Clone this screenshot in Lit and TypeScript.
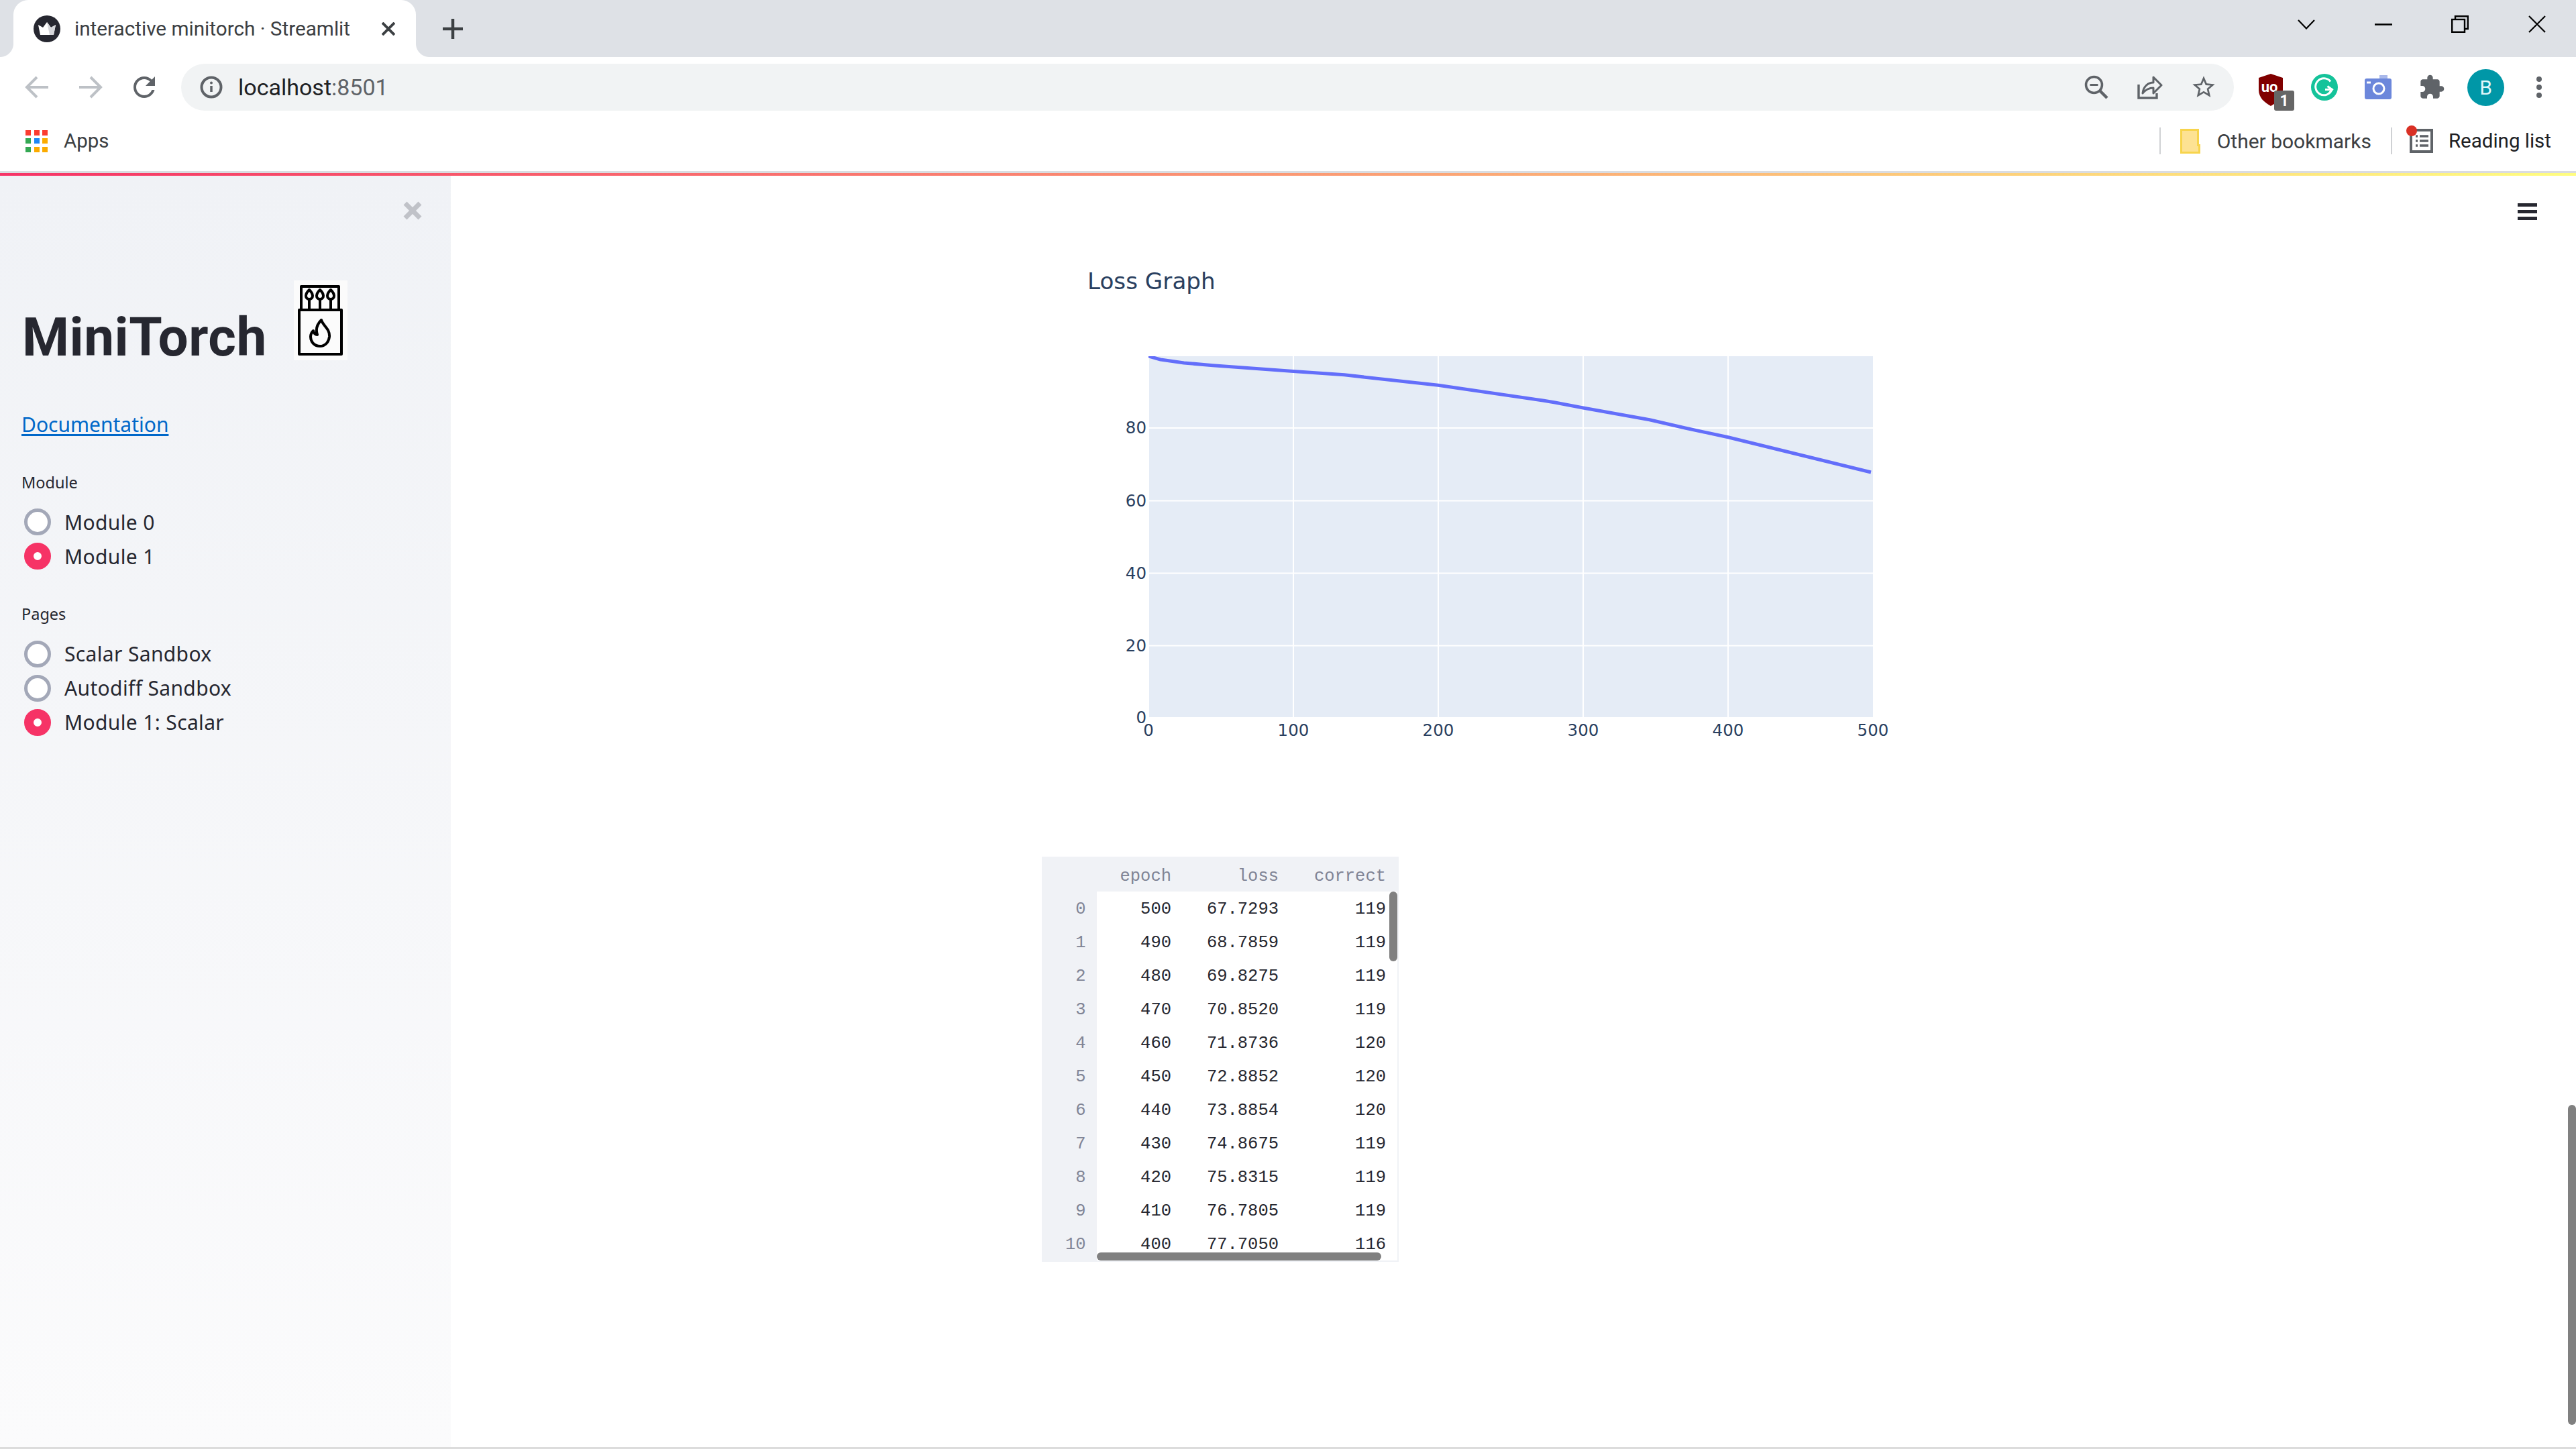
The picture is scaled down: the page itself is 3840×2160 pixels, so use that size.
/**
 * Browser window showing the MiniTorch Streamlit app
 */

import { LitElement, css, html, svg } from "lit";
import { customElement } from "lit/decorators.js";
import { classMap } from "lit/directives/class-map.js";

const LOSS_ROWS = [
  [500, "67.7293", 119],
  [490, "68.7859", 119],
  [480, "69.8275", 119],
  [470, "70.8520", 119],
  [460, "71.8736", 120],
  [450, "72.8852", 120],
  [440, "73.8854", 120],
  [430, "74.8675", 119],
  [420, "75.8315", 119],
  [410, "76.7805", 119],
  [400, "77.7050", 116],
];

const LOSS_LINE =
  "1712,531 1730,536 1765,541 1808,544.7 1928,553.4 2004,558.8 2144,574.3 2300,597 2318,600 2360,608 2459,625.7 2512,638 2576,651.8 2789,704";

const APP_COLORS = ["#fb3c30", "#fb3c30", "#fb3c30", "#34a853", "#1e88f5", "#fbab00", "#34a853", "#fbab00", "#fbab00"];

@customElement("app-root")
export class AppRoot extends LitElement {
  static styles = css`
    :host {
      display: block;
      width: 3840px;
      height: 2160px;
      overflow: hidden;
      background: #fff;
      font-family: "Roboto", "Noto Sans", sans-serif;
    }

    svg {
      display: block;
      flex: none;
    }

    .page {
      display: flex;
      flex-direction: column;
      height: 2160px;
    }

    /* tab strip */
    .tabstrip {
      display: flex;
      align-items: stretch;
      height: 85px;
      flex: none;
      background: #dee1e6;
    }

    .tab {
      position: relative;
      display: flex;
      align-items: center;
      width: 600px;
      margin-left: 20px;
      padding-left: 30px;
      box-sizing: border-box;
      background: #fff;
      border-radius: 22px 22px 0 0;
      font-size: 29.7px;
      color: #3c4043;
    }

    .tab::before,
    .tab::after {
      content: "";
      position: absolute;
      bottom: 0;
      width: 20px;
      height: 20px;
    }

    .tab::before {
      left: -20px;
      background: radial-gradient(circle at 0 0, #dee1e6 19.5px, #fff 20.5px);
    }

    .tab::after {
      right: -20px;
      background: radial-gradient(circle at 100% 0, #dee1e6 19.5px, #fff 20.5px);
    }

    .tab-title {
      margin-left: 21px;
      white-space: nowrap;
    }

    .tab-close {
      position: absolute;
      right: 31px;
      top: 33px;
    }

    .new-tab {
      margin-left: 40px;
      align-self: center;
    }

    .window-controls {
      display: flex;
      margin-left: auto;
      margin-right: 1px;
    }

    .window-controls div {
      display: flex;
      align-items: center;
      justify-content: center;
      width: 114.5px;
      height: 72px;
    }

    /* navigation bar */
    .nav {
      display: flex;
      align-items: center;
      height: 85px;
      flex: none;
      padding: 5px 15px 0;
      box-sizing: border-box;
    }

    .cell {
      display: flex;
      align-items: center;
      justify-content: center;
      width: 80px;
      height: 70px;
      flex: none;
      position: relative;
    }

    .omnibox {
      display: flex;
      align-items: center;
      flex: 1;
      height: 70px;
      margin: 0 15px;
      padding: 0 5px 0 28px;
      background: #f1f3f4;
      border-radius: 35px;
    }

    .url {
      margin-left: 23px;
      font-size: 34px;
      color: #202124;
      flex: 1;
    }

    .url span {
      color: #5f6368;
    }

    .ublock {
      margin: 15px 0 0 17px;
    }

    /* bookmarks bar */
    .bookmarks {
      display: flex;
      align-items: center;
      height: 85px;
      flex: none;
      padding: 0 37px 5px 38px;
      box-sizing: border-box;
      font-size: 29.5px;
      color: #3c4043;
    }

    .apps-grid {
      display: grid;
      grid-template-columns: repeat(3, 8px);
      grid-auto-rows: 8px;
      gap: 4.5px;
      margin-right: 24px;
    }

    .bookmark-sep {
      width: 2px;
      height: 40px;
      background: #cfd1d4;
    }

    .push {
      margin-left: auto;
    }

    .folder {
      margin: 0 25px 0 29px;
    }

    .other-text {
      font-size: 30px;
      margin-right: 29px;
    }

    .reading {
      position: relative;
      margin: 0 19px 0 27px;
    }

    .reading-text {
      color: #202124;
    }

    .rule {
      height: 3px;
      flex: none;
      background: #dadce0;
    }

    .decoration {
      height: 4px;
      flex: none;
      background: linear-gradient(90deg, #f63366, #fffd80);
    }

    /* streamlit app */
    .app {
      display: flex;
      flex: 1;
      min-height: 0;
    }

    .sidebar {
      width: 672px;
      flex: none;
      box-sizing: border-box;
      background: linear-gradient(180deg, #f0f2f6, #fbfbfc);
      color: #262730;
      font-family: "Noto Sans", sans-serif;
    }

    .close-row {
      display: flex;
      align-items: center;
      justify-content: flex-end;
      height: 104px;
      padding-right: 43px;
    }

    .brand {
      display: flex;
      align-items: flex-start;
      margin-top: 52px;
      padding-left: 33px;
    }

    .brand h1 {
      margin: 44.7px 40px 0 0;
      font-family: "Roboto", sans-serif;
      font-size: 80px;
      line-height: 80px;
      font-weight: 700;
      letter-spacing: 0.5px;
      color: #262730;
    }

    .doc-link {
      display: block;
      margin: 70.7px 0 0 32px;
      font-size: 30px;
      line-height: 40px;
      color: #0068c9;
      text-decoration: underline;
      text-decoration-thickness: 3px;
      text-underline-offset: 3px;
    }

    .field-label {
      padding-left: 32px;
      font-size: 23.5px;
      line-height: 30px;
    }

    .field-label.module {
      margin-top: 50.6px;
    }

    .field-label.pages {
      margin-top: 45.5px;
    }

    .radios {
      margin-top: 19px;
      padding-left: 36px;
    }

    .radio {
      display: flex;
      align-items: center;
      gap: 20px;
      height: 51px;
      font-size: 30px;
      letter-spacing: 0.35px;
    }

    .radio-mark {
      width: 40px;
      height: 40px;
      box-sizing: border-box;
      flex: none;
      border: 5px solid #a3a8b8;
      border-radius: 50%;
      background: #fff;
    }

    .radio-mark.checked {
      border: 14px solid #f63366;
    }

    .main {
      position: relative;
      flex: 1;
      padding-left: 881px;
      overflow: hidden;
    }

    .chart {
      margin-top: 118px;
    }

    .chart-title {
      font-family: "DejaVu Sans", sans-serif;
      font-size: 34.2px;
      fill: #2a3f5f;
    }

    .tick {
      font-family: "DejaVu Sans", sans-serif;
      font-size: 24.5px;
      fill: #2a3f5f;
    }

    .df {
      position: relative;
      width: 532px;
      height: 604px;
      margin-top: 77px;
      box-sizing: border-box;
      overflow: hidden;
      background: #fff;
      border: solid #f0f2f6;
      border-width: 0 2px 2px 0;
      font-family: "Liberation Mono", monospace;
      font-size: 25.5px;
      color: #262730;
    }

    .df-row {
      display: grid;
      grid-template-columns: 82px 124px 160px 160px;
      height: 50px;
      line-height: 53px;
      text-align: right;
    }

    .df-row > * {
      padding-right: 13px;
      height: 50px;
    }

    .df-row > .index {
      padding-right: 16.5px;
      background: #f0f2f6;
      color: #808495;
    }

    .df-head {
      height: 52px;
      line-height: 59px;
      background: #f0f2f6;
      color: #808495;
    }

    .df-scroll-v {
      position: absolute;
      left: 518px;
      top: 52px;
      width: 12px;
      height: 104px;
      border-radius: 6px;
      background: #808080;
    }

    .df-scroll-h {
      position: absolute;
      left: 82px;
      top: 590px;
      width: 424px;
      height: 12px;
      border-radius: 6px;
      background: #808080;
    }

    .hamburger {
      position: absolute;
      top: 41px;
      right: 58px;
      width: 29px;
      display: flex;
      flex-direction: column;
      gap: 5px;
    }

    .hamburger i {
      display: block;
      height: 5px;
      background: #262730;
    }

    .page-scroll {
      position: absolute;
      top: 1385px;
      right: 0;
      width: 12px;
      height: 477px;
      border-radius: 6px;
      background: #808080;
    }

    .bottom-edge {
      height: 3px;
      flex: none;
      background: #dcdcdc;
    }
  `;

  private renderTabs() {
    return html`
      <div class="tabstrip">
        <div class="tab">
          <svg width="40" height="40" viewBox="0 0 40 40">
            <circle cx="20" cy="20" r="20" fill="#262730" />
            <path d="M7 14l7 4 6-8 6 8 7-4-3 15H10z" fill="#fff" />
            <path d="M20 10l6 8 7-4-3 15h-6z" fill="#d5d6da" />
          </svg>
          <span class="tab-title">interactive minitorch · Streamlit</span>
          <svg class="tab-close" width="20" height="20" viewBox="0 0 20 20">
            <path d="M1 1l18 18M19 1L1 19" stroke="#3c4043" stroke-width="4" />
          </svg>
        </div>
        <svg class="new-tab" width="30" height="30" viewBox="0 0 30 30">
          <path d="M15 0v30M0 15h30" stroke="#3c4043" stroke-width="4.5" />
        </svg>
        <div class="window-controls">
          <div>
            <svg width="26" height="15" viewBox="0 0 26 15" fill="none">
              <path d="M1 1l12 12.5L25 1" stroke="#000" stroke-width="2.2" />
            </svg>
          </div>
          <div>
            <svg width="26" height="3" viewBox="0 0 26 3"><path d="M0 1.5h26" stroke="#000" stroke-width="2.6" /></svg>
          </div>
          <div>
            <svg width="26" height="26" viewBox="0 0 26 26" fill="none" stroke="#000" stroke-width="2.4">
              <rect x="1.2" y="6" width="18.8" height="18.8" />
              <path d="M6 6V1.2h18.8V20H20" />
            </svg>
          </div>
          <div>
            <svg width="26" height="26" viewBox="0 0 26 26">
              <path d="M1 1l24 24M25 1L1 25" stroke="#000" stroke-width="2.2" />
            </svg>
          </div>
        </div>
      </div>
    `;
  }

  private renderNav() {
    return html`
      <div class="nav">
        <div class="cell">
          <svg width="36" height="34" viewBox="0 0 36 34" fill="none" stroke="#bdc1c6" stroke-width="4">
            <path d="M35 17H4M18 2L3 17l15 15" />
          </svg>
        </div>
        <div class="cell">
          <svg width="36" height="34" viewBox="0 0 36 34" fill="none" stroke="#bdc1c6" stroke-width="4">
            <path d="M1 17h31M18 2l15 15-15 15" />
          </svg>
        </div>
        <div class="cell">
          <svg width="48" height="48" viewBox="0 0 24 24" fill="#5f6368">
            <path
              d="M17.65 6.35C16.2 4.9 14.21 4 12 4c-4.42 0-7.99 3.58-7.99 8s3.57 8 7.99 8c3.73 0 6.84-2.55 7.73-6h-2.08c-.82 2.33-3.04 4-5.65 4-3.31 0-6-2.69-6-6s2.69-6 6-6c1.66 0 3.14.69 4.22 1.78L13 11h7V4l-2.35 2.35z"
            />
          </svg>
        </div>
        <div class="omnibox">
          <svg width="34" height="34" viewBox="0 0 34 34" fill="none">
            <circle cx="17" cy="17" r="14.5" stroke="#5f6368" stroke-width="4" />
            <path d="M17 15v9" stroke="#5f6368" stroke-width="3.5" />
            <circle cx="17" cy="10.5" r="2" fill="#5f6368" />
          </svg>
          <div class="url">localhost<span>:8501</span></div>
          <div class="cell">
            <svg width="36" height="36" viewBox="0 0 36 36" fill="none" stroke="#5f6368">
              <circle cx="14.5" cy="14.5" r="12" stroke-width="3.5" />
              <path d="M8.5 14.5h12" stroke-width="3" />
              <path d="M23 23l11 11" stroke-width="4.5" />
            </svg>
          </div>
          <div class="cell">
            <svg width="38" height="36" viewBox="0 0 38 36" fill="none" stroke="#5f6368" stroke-width="3">
              <path d="M2 14v20h27v-7" stroke-width="3.4" />
              <path d="M8 27c1-10 8-16 16-16V3l12 12-12 12v-8c-6 0-11 2-16 8z" stroke-linejoin="round" />
            </svg>
          </div>
          <div class="cell">
            <svg width="40" height="40" viewBox="0 0 24 24" fill="#5f6368">
              <path
                d="M22 9.24l-7.19-.62L12 2 9.19 8.63 2 9.24l5.46 4.73L5.82 21 12 17.27 18.18 21l-1.63-7.03L22 9.24zM12 15.4l-3.76 2.27 1-4.28-3.32-2.88 4.38-.38L12 6.1l1.71 4.04 4.38.38-3.32 2.88 1 4.28L12 15.4z"
              />
            </svg>
          </div>
        </div>
        ${this.renderExtensions()}
      </div>
    `;
  }

  private renderExtensions() {
    return html`
      <div class="cell">
        <svg class="ublock" width="53" height="55" viewBox="0 0 53 55">
          <path d="M18 0l18 6v18c0 12-9 19-18 24C9 43 0 36 0 24V6z" fill="#800000" />
          <text x="16" y="27" text-anchor="middle" font-family="Roboto" font-size="22" font-weight="700" fill="#fff">uo</text>
          <rect x="23" y="25" width="30" height="30" rx="3" fill="#666" />
          <text x="38" y="48" text-anchor="middle" font-family="Roboto" font-size="23" font-weight="700" fill="#fff">1</text>
        </svg>
      </div>
      <div class="cell">
        <svg width="40" height="40" viewBox="0 0 40 40" fill="none">
          <circle cx="20" cy="20" r="20" fill="#15c39a" />
          <path d="M29 11.500a12.500 12.500 0 1 0 2 12H21" stroke="#fff" stroke-width="3" />
          <path d="M24.500 18.500l7 5-5 6" stroke="#fff" stroke-width="3" />
        </svg>
      </div>
      <div class="cell">
        <svg width="40" height="36" viewBox="0 0 40 36">
          <path d="M22 0h12v7H22z" fill="#a9b8ea" />
          <rect y="5" width="40" height="31" rx="3" fill="#6c87db" />
          <circle cx="21" cy="20" r="8" fill="none" stroke="#fff" stroke-width="3" />
          <path d="M3 11h6" stroke="#fff" stroke-width="3" />
        </svg>
      </div>
      <div class="cell">
        <svg width="40" height="40" viewBox="0 0 24 24" fill="#5f6368">
          <path
            d="M20.5 11H19V7c0-1.100-.9-2-2-2h-4V3.500C13 2.120 11.880 1 10.500 1S8 2.120 8 3.500V5H4c-1.100 0-1.990.9-1.990 2v3.800H3.500c1.490 0 2.700 1.210 2.700 2.700s-1.210 2.700-2.700 2.700H2V20c0 1.100.9 2 2 2h3.800v-1.500c0-1.490 1.210-2.700 2.700-2.700 1.490 0 2.700 1.210 2.700 2.700V22H17c1.100 0 2-.9 2-2v-4h1.500c1.380 0 2.500-1.120 2.500-2.500S21.880 11 20.500 11z"
          />
        </svg>
      </div>
      <div class="cell">
        <svg width="55" height="55" viewBox="0 0 55 55">
          <circle cx="27.500" cy="27.500" r="27.500" fill="#0097a7" />
          <text x="27.500" y="38" text-anchor="middle" font-family="Roboto" font-size="30" fill="#e0f7fa">B</text>
        </svg>
      </div>
      <div class="cell">
        <svg width="8" height="32" viewBox="0 0 8 32" fill="#5f6368">
          <circle cx="4" cy="4" r="4" /><circle cx="4" cy="16" r="4" /><circle cx="4" cy="28" r="4" />
        </svg>
      </div>
    `;
  }

  private renderBookmarks() {
    return html`
      <div class="bookmarks">
        <div class="apps-grid">
          ${APP_COLORS.map((c) => html`<div style="background:${c}"></div>`)}
        </div>
        <span>Apps</span>
        <div class="bookmark-sep push"></div>
        <svg class="folder" width="30" height="37" viewBox="0 0 30 37">
          <path d="M1.500 1.500h25v23h2v11h-27z" fill="#fde293" stroke="#f7d44c" stroke-width="3" />
        </svg>
        <span class="other-text">Other bookmarks</span>
        <div class="bookmark-sep"></div>
        <div class="reading">
          <svg width="38" height="44" viewBox="0 0 38 44" style="overflow:visible">
            <rect x="1" y="6" width="31" height="32" fill="#fff" stroke="#5f6368" stroke-width="4" />
            <path d="M8 15h3M14 15h13M8 22h3M14 22h13M8 29h3M14 29h13" stroke="#5f6368" stroke-width="3.500" />
            <circle cx="2" cy="7" r="8" fill="#d93025" />
          </svg>
        </div>
        <span class="reading-text">Reading list</span>
      </div>
    `;
  }

  private renderMatchbox() {
    return html`
      <svg width="80" height="119" viewBox="0 0 80 119" fill="none" stroke="#000" stroke-width="4" stroke-linejoin="round">
        <rect width="80" height="119" fill="#fbfbfb" stroke="none" />
        <path d="M11 42V9h56v33" />
        <rect x="8" y="44" width="63" height="66" />
        <path d="M23 14c3 3 5 6 5 9a5 5 0 0 1-10 0c0-3 2-6 5-9z" />
        <path d="M39 14c3 3 5 6 5 9a5 5 0 0 1-10 0c0-3 2-6 5-9z" />
        <path d="M55 14c3 3 5 6 5 9a5 5 0 0 1-10 0c0-3 2-6 5-9z" />
        <path d="M23 28v14M39 28v14M55 28v14" />
        <path
          d="M41 59C43 67 54 72 53 84C52 93 46 98 39 98C31 98 25 92 25 84C25 80 27 77 29 75C30 79 32 81 35 81C32 72 35 65 41 59Z"
        />
      </svg>
    `;
  }

  private renderRadio(label: string, checked: boolean) {
    return html`
      <div class="radio">
        <div class=${classMap({ "radio-mark": true, checked })}></div>
        <span>${label}</span>
      </div>
    `;
  }

  private renderSidebar() {
    return html`
      <aside class="sidebar">
        <div class="close-row">
          <svg width="28" height="28" viewBox="0 0 28 28">
            <path d="M3 3l22 22M25 3L3 25" stroke="#c0c2c8" stroke-width="7" />
          </svg>
        </div>
        <div class="brand">
          <h1>MiniTorch</h1>
          ${this.renderMatchbox()}
        </div>
        <a class="doc-link">Documentation</a>
        <div class="field-label module">Module</div>
        <div class="radios">
          ${this.renderRadio("Module 0", false)} ${this.renderRadio("Module 1", true)}
        </div>
        <div class="field-label pages">Pages</div>
        <div class="radios">
          ${this.renderRadio("Scalar Sandbox", false)} ${this.renderRadio("Autodiff Sandbox", false)}
          ${this.renderRadio("Module 1: Scalar", true)}
        </div>
      </aside>
    `;
  }

  private renderChart() {
    const xTicks = [
      [1712, "0"],
      [1928, "100"],
      [2144, "200"],
      [2360, "300"],
      [2576, "400"],
      [2792, "500"],
    ] as const;
    const yTicks = [
      [638, "80"],
      [746.5, "60"],
      [854.5, "40"],
      [962.5, "20"],
      [1070, "0"],
    ] as const;
    return html`
      <svg class="chart" width="1300" height="820" viewBox="1553 380 1300 820">
        <defs>
          <clipPath id="plot-clip"><rect x="1712" y="531" width="1080" height="538" /></clipPath>
        </defs>
        <text class="chart-title" x="1621" y="431">Loss Graph</text>
        <rect x="1713" y="531" width="1079" height="538" fill="#e5ecf6" />
        ${xTicks.slice(1, 5).map(([x]) => svg`<path d="M${x} 531V1069" stroke="#fff" stroke-width="2" />`)}
        ${yTicks.slice(0, 4).map(([y]) => svg`<path d="M1713 ${y}H2792" stroke="#fff" stroke-width="2" />`)}
        <polyline
          points=${LOSS_LINE}
          fill="none"
          stroke="#636efa"
          stroke-width="5"
          stroke-linejoin="round"
          clip-path="url(#plot-clip)"
        />
        ${xTicks.map(([x, t]) => svg`<text class="tick" x=${x} y="1097" text-anchor="middle">${t}</text>`)}
        ${yTicks.map(([y, t]) => svg`<text class="tick" x="1709" y=${y + 8} text-anchor="end">${t}</text>`)}
      </svg>
    `;
  }

  private renderTable() {
    return html`
      <div class="df">
        <div class="df-row df-head">
          <div class="index"></div>
          <div>epoch</div>
          <div>loss</div>
          <div>correct</div>
        </div>
        ${LOSS_ROWS.map(
          (row, i) => html`
            <div class="df-row">
              <div class="index">${i}</div>
              <div>${row[0]}</div>
              <div>${row[1]}</div>
              <div>${row[2]}</div>
            </div>
          `
        )}
        <div class="df-scroll-v"></div>
        <div class="df-scroll-h"></div>
      </div>
    `;
  }

  render() {
    return html`
      <div class="page">
        ${this.renderTabs()} ${this.renderNav()} ${this.renderBookmarks()}
        <div class="rule"></div>
        <div class="decoration"></div>
        <div class="app">
          ${this.renderSidebar()}
          <main class="main">
            ${this.renderChart()} ${this.renderTable()}
            <div class="hamburger"><i></i><i></i><i></i></div>
            <div class="page-scroll"></div>
          </main>
        </div>
        <div class="bottom-edge"></div>
      </div>
    `;
  }
}

declare global {
  interface HTMLElementTagNameMap {
    "app-root": AppRoot;
  }
}
